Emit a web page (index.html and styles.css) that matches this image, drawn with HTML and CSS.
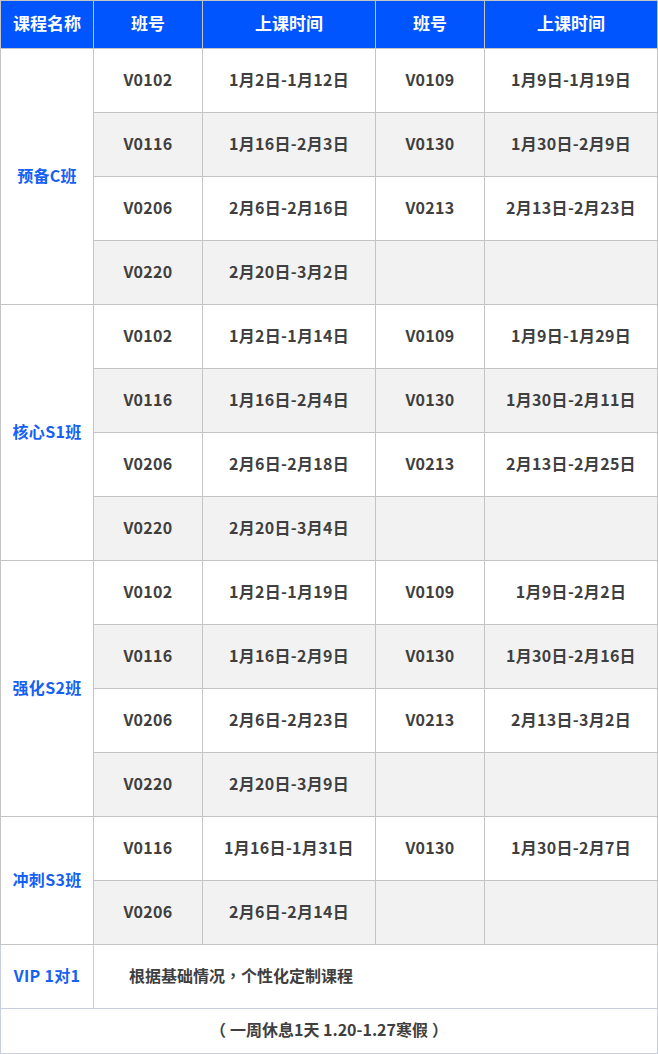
FILE: index.html
```html
<!DOCTYPE html>
<html lang="zh">
<head>
<meta charset="utf-8">
<link rel="stylesheet" href="styles.css">
</head>
<body>
<table class="schedule">
  <colgroup>
    <col class="c-name"><col class="c-code"><col class="c-time"><col class="c-code"><col class="c-time">
  </colgroup>
  <thead>
    <tr class="head"><th>课程名称</th><th>班号</th><th>上课时间</th><th>班号</th><th>上课时间</th></tr>
  </thead>
  <tbody>
    <tr><td class="name" rowspan="4">预备C班</td><td>V0102</td><td>1月2日-1月12日</td><td>V0109</td><td>1月9日-1月19日</td></tr>
    <tr class="alt"><td>V0116</td><td>1月16日-2月3日</td><td>V0130</td><td>1月30日-2月9日</td></tr>
    <tr><td>V0206</td><td>2月6日-2月16日</td><td>V0213</td><td>2月13日-2月23日</td></tr>
    <tr class="alt"><td>V0220</td><td>2月20日-3月2日</td><td></td><td></td></tr>

    <tr><td class="name" rowspan="4">核心S1班</td><td>V0102</td><td>1月2日-1月14日</td><td>V0109</td><td>1月9日-1月29日</td></tr>
    <tr class="alt"><td>V0116</td><td>1月16日-2月4日</td><td>V0130</td><td>1月30日-2月11日</td></tr>
    <tr><td>V0206</td><td>2月6日-2月18日</td><td>V0213</td><td>2月13日-2月25日</td></tr>
    <tr class="alt"><td>V0220</td><td>2月20日-3月4日</td><td></td><td></td></tr>

    <tr><td class="name" rowspan="4">强化S2班</td><td>V0102</td><td>1月2日-1月19日</td><td>V0109</td><td>1月9日-2月2日</td></tr>
    <tr class="alt"><td>V0116</td><td>1月16日-2月9日</td><td>V0130</td><td>1月30日-2月16日</td></tr>
    <tr><td>V0206</td><td>2月6日-2月23日</td><td>V0213</td><td>2月13日-3月2日</td></tr>
    <tr class="alt"><td>V0220</td><td>2月20日-3月9日</td><td></td><td></td></tr>

    <tr><td class="name" rowspan="2">冲刺S3班</td><td>V0116</td><td>1月16日-1月31日</td><td>V0130</td><td>1月30日-2月7日</td></tr>
    <tr class="alt"><td>V0206</td><td>2月6日-2月14日</td><td></td><td></td></tr>

    <tr class="vip"><td class="name">VIP 1对1</td><td class="desc" colspan="4">根据基础情况<span class="punct" lang="zh-TW">，</span>个性化定制课程</td></tr>
    <tr class="foot"><td colspan="5"><span class="punct open" lang="zh-TW">（</span>一周休息1天 1.20-1.27寒假<span class="punct close" lang="zh-TW">）</span></td></tr>
  </tbody>
</table>
</body>
</html>
```
FILE: styles.css
```css
html, body {
  margin: 0;
  padding: 0;
  background: #ffffff;
}
.schedule {
  border-collapse: collapse;
  table-layout: fixed;
  width: 658px;
  font-family: "Noto Sans CJK SC", "Open Sans", sans-serif;
  font-size: 16px;
  font-weight: bold;
  color: #3f3f3f;
}
.c-name { width: 93px; }
.c-code { width: 109px; }
.c-time { width: 173px; }
.schedule th,
.schedule td {
  border: 1px solid #c4c4c4;
  text-align: center;
  vertical-align: middle;
  padding: 0 0 4px 0;
  line-height: 20px;
}
.head th {
  height: 44px;
  padding-bottom: 3px;
  background: #0055fe;
  color: #ffffff;
  font-weight: bold;
  font-size: 17px;
}
.schedule tbody tr {
  height: 64px;
}
.schedule tbody td {
  height: 59px;
  letter-spacing: 0.3px;
}
.alt td {
  background: #f2f2f2;
}
.schedule td.name {
  color: #1560f5;
  background: #ffffff;
}
.vip td {
  border-color: #c8cedb;
}
.schedule .vip td.desc {
  text-align: left;
  padding-left: 35px;
  letter-spacing: 0;
}
.punct {
  font-family: "Noto Sans CJK TC", sans-serif;
}
.punct.open {
  margin-right: 4px;
}
.punct.close {
  margin-left: 4px;
}
.schedule .foot td {
  height: 40px;
  border-color: #c8cedb;
  letter-spacing: 0;
}
.schedule tbody tr.foot {
  height: 45px;
}
```
